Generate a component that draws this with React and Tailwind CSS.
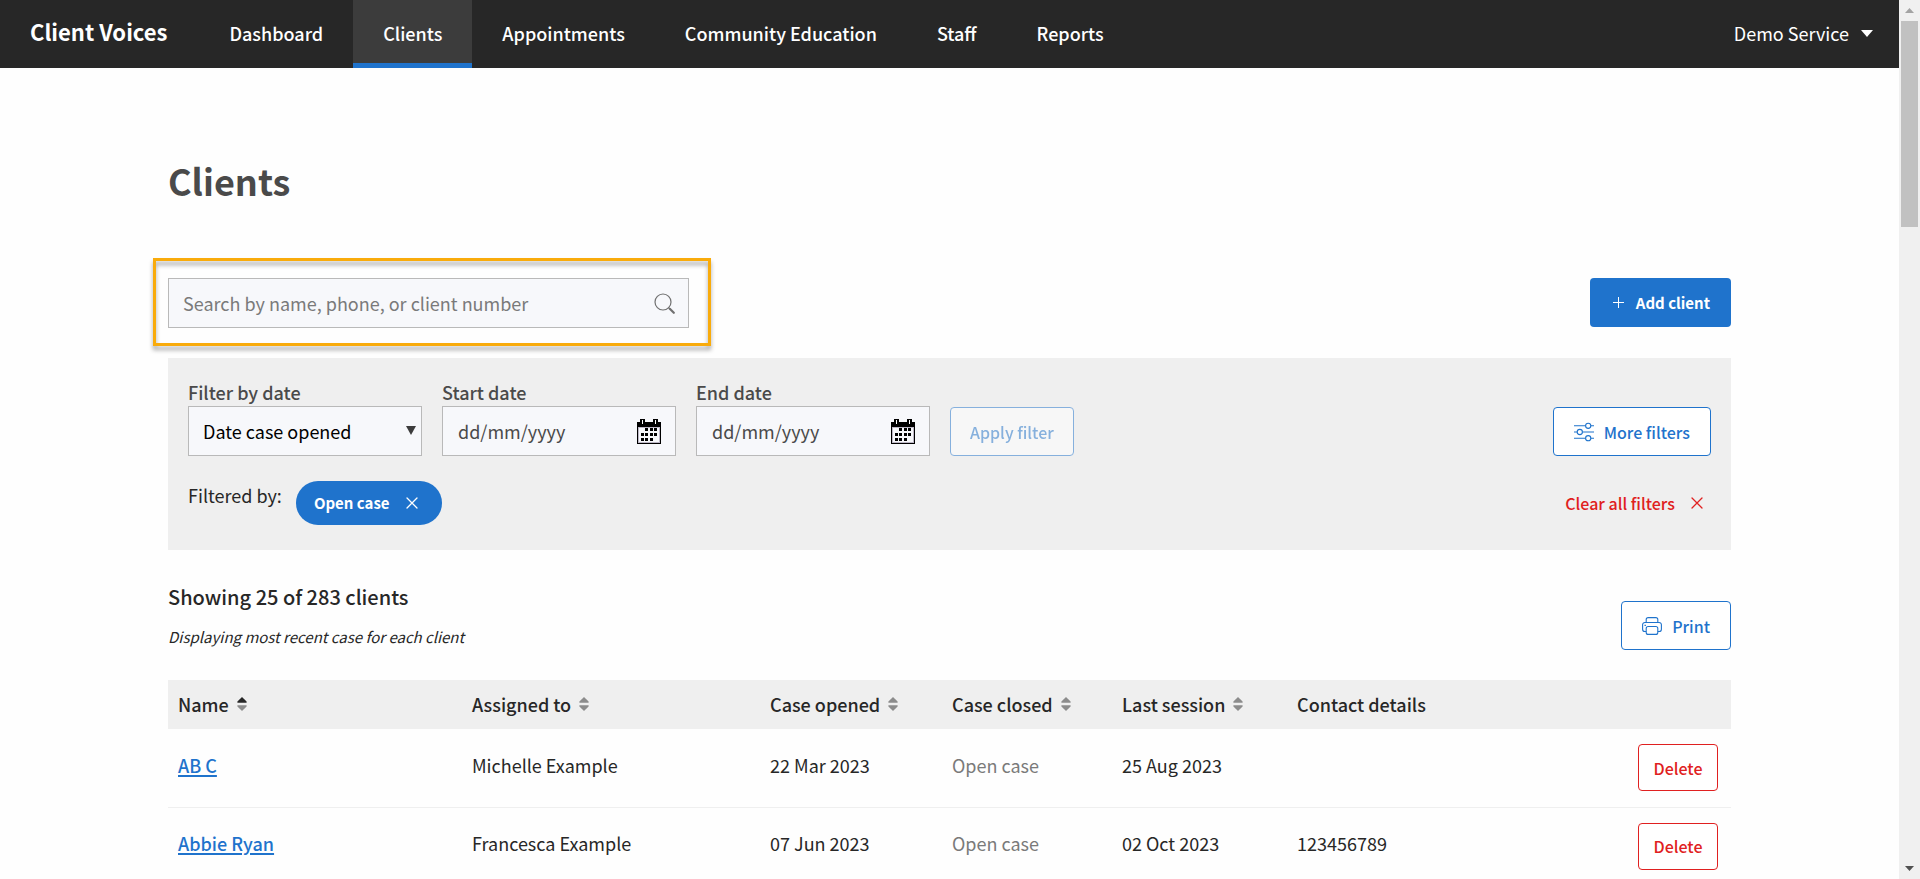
import { useState } from "react";

const navItems = ["Dashboard", "Clients", "Appointments", "Community Education", "Staff", "Reports"];

const columns = [
  { label: "Name", sort: "asc", width: "w-[294px]" },
  { label: "Assigned to", sort: "none", width: "w-[298px]" },
  { label: "Case opened", sort: "none", width: "w-[182px]" },
  { label: "Case closed", sort: "none", width: "w-[170px]" },
  { label: "Last session", sort: "none", width: "w-[175px]" },
  { label: "Contact details", width: "w-[300px]" },
];

const clients = [
  { name: "AB C", assigned: "Michelle Example", opened: "22 Mar 2023", closed: "Open case", last: "25 Aug 2023", contact: "" },
  { name: "Abbie Ryan", assigned: "Francesca Example", opened: "07 Jun 2023", closed: "Open case", last: "02 Oct 2023", contact: "123456789" },
];

function SortIcon({ sort }) {
  return (
    <svg width="10" height="14" viewBox="0 0 10 14" className="shrink-0">
      <path d="M5 0l4.6 4.6v1.2H.4V4.6z" fill={sort === "asc" ? "#272727" : "#8c8c8c"} />
      <path d="M5 14L.4 9.4V8.2h9.2v1.2z" fill="#8c8c8c" />
    </svg>
  );
}

function CloseIcon() {
  return (
    <svg width="12" height="12" viewBox="0 0 12 12" fill="none" stroke="currentColor" strokeWidth="1.3" strokeLinecap="round">
      <path d="M1 1l10 10M11 1L1 11" />
    </svg>
  );
}

function PlusIcon() {
  return (
    <svg width="11" height="11" viewBox="0 0 11 11" stroke="currentColor" strokeWidth="1">
      <path d="M5.5 0v11M0 5.5h11" />
    </svg>
  );
}

function SearchIcon() {
  return (
    <svg width="21" height="21" viewBox="0 0 21 21" fill="none" stroke="#707070" strokeLinecap="round">
      <circle cx="9" cy="9" r="8" strokeWidth="1.2" />
      <path d="M14.8 14.8l1.2 1.2" strokeWidth="1.2" />
      <path d="M15.8 15.8l4 4" strokeWidth="2.2" />
    </svg>
  );
}

function SlidersIcon() {
  return (
    <svg width="20" height="20" viewBox="0 0 20 20" fill="none" stroke="currentColor" strokeWidth="1.1">
      <path d="M0 3.8h11.5M17 3.8h3M0 10h3M8.5 10H20M0 16.2h11.5M17 16.2h3" />
      <circle cx="14.2" cy="3.8" r="2.6" />
      <circle cx="5.8" cy="10" r="2.6" />
      <circle cx="14.2" cy="16.2" r="2.6" />
    </svg>
  );
}

function PrinterIcon() {
  return (
    <svg width="20" height="20" viewBox="0 0 20 20" fill="none" stroke="currentColor" strokeWidth="1.1">
      <path d="M4.2 6.5V3.6a2 2 0 0 1 2-2h7.6a2 2 0 0 1 2 2v2.9" />
      <path d="M4.2 15.5H2.9A2.3 2.3 0 0 1 .6 13.2V8.8a2.3 2.3 0 0 1 2.3-2.3h14.2a2.3 2.3 0 0 1 2.3 2.3v4.4a2.3 2.3 0 0 1-2.3 2.3h-1.3" />
      <rect x="4.2" y="10.5" width="11.6" height="7.9" rx="2" />
      <path d="M2.5 9.4h1.4" />
    </svg>
  );
}

function CalendarIcon() {
  return (
    <svg width="24" height="25" viewBox="0 0 24 25" shapeRendering="crispEdges">
      <path d="M0 3h24v22H0z" fill="#000" />
      <path d="M1 8h22v16H1z" fill="#bdb7c6" />
      <path d="M2 9h20v14H2z" fill="#f7f8fb" />
      <path d="M3 0h5v6H3zM16 0h5v6h-5z" fill="#000" />
      <path d="M5 1h1v4H5zM18 1h1v4h-1z" fill="#fff" />
      <path
        d="M8 9h3v3H8zM12.5 9h3v3h-3zM17 9h3v3h-3zM3.5 14h3v3h-3zM8 14h3v3H8zM12.5 14h3v3h-3zM17 14h3v3h-3zM3.5 19h3v3h-3zM8 19h3v3H8zM12.5 19h3v3h-3z"
        fill="#000"
      />
    </svg>
  );
}

function DateField({ id, label }) {
  const [value, setValue] = useState("");

  return (
    <div className="w-[234px]">
      <label htmlFor={id} className="block font-medium leading-7 text-[#4a4a4a]">{label}</label>
      <div className="flex h-[50px] items-center border border-[#b9b9b9] bg-[#f7f8fb] pr-3.5">
        <input
          id={id}
          type="text"
          placeholder="dd/mm/yyyy"
          value={value}
          onChange={(e) => setValue(e.target.value)}
          className="h-full w-full min-w-0 flex-1 pl-[15px] placeholder-[#4a4a4a] outline-none"
        />
        <button type="button" aria-label={`Choose ${label}`}>
          <CalendarIcon />
        </button>
      </div>
    </div>
  );
}

function Header() {
  return (
    <header className="flex h-[68px] items-stretch bg-[#272727] text-white">
      <a href="#" className="flex items-center pb-1.5 pl-[30px] pr-8 text-[22px] font-bold">Client Voices</a>
      <nav className="flex items-stretch">
        {navItems.map((item) => (
          <a
            key={item}
            href="#"
            className={
              item === "Clients"
                ? "flex items-center border-b-[5px] border-[#1f73cc] bg-[#3c3c3c] px-[30px] pt-[3px] font-medium"
                : "flex items-center px-[30px] pb-0.5 font-medium"
            }
          >
            {item}
          </a>
        ))}
      </nav>
      <button type="button" className="ml-auto flex items-center gap-3 pb-0.5 pr-[26px]">
        Demo Service
        <svg width="12" height="7" viewBox="0 0 12 7" fill="currentColor">
          <path d="M0 0h12L6 7z" />
        </svg>
      </button>
    </header>
  );
}

function Filters() {
  return (
    <section className="mt-[30px] h-[192px] bg-[#efefef] px-5 pt-5">
      <div className="flex items-end gap-5">
        <div className="w-[234px]">
          <label htmlFor="date-filter" className="block font-medium leading-7 text-[#4a4a4a]">Filter by date</label>
          <div className="relative">
            <select
              id="date-filter"
              className="h-[50px] w-full appearance-none border border-[#b9b9b9] bg-[#f7f8fb] pl-3.5 text-black"
            >
              <option>Date case opened</option>
              <option>Date case closed</option>
            </select>
            <svg width="10" height="9" viewBox="0 0 10 9" fill="#3c3c3c" className="pointer-events-none absolute right-1.5 top-5">
              <path d="M0 0h10L5 9z" />
            </svg>
          </div>
        </div>
        <DateField id="start-date" label="Start date" />
        <DateField id="end-date" label="End date" />
        <button
          type="button"
          disabled
          className="h-[49px] rounded border border-[#1f73cc] bg-white px-[19px] text-base font-medium text-[#1f73cc] opacity-50"
        >
          Apply filter
        </button>
        <button
          type="button"
          className="ml-auto flex h-[49px] items-center gap-2.5 rounded border border-[#1f73cc] bg-white px-5 text-base font-medium text-[#1f73cc]"
        >
          <SlidersIcon />
          More filters
        </button>
      </div>

      <div className="mt-[25px] flex items-start">
        <span className="leading-7">Filtered by:</span>
        <button type="button" className="ml-3.5 flex h-11 items-center gap-4 rounded-full bg-[#1f73cc] pl-[18px] pr-6 text-[15px] font-bold text-white">
          Open case
          <CloseIcon />
        </button>
        <button type="button" className="ml-auto flex h-11 items-center gap-4 pr-2 text-base font-medium text-[#e02020]">
          Clear all filters
          <CloseIcon />
        </button>
      </div>
    </section>
  );
}

function ClientTable() {
  return (
    <table className="mt-[30px] w-full table-fixed text-left">
      <thead>
        <tr className="h-[49px] bg-[#efefef]">
          {columns.map((col) => (
            <th key={col.label} className={`${col.width} px-2.5 pb-0.5 font-medium`}>
              {col.sort ? (
                <button type="button" className="flex items-center gap-2">
                  {col.label}
                  <SortIcon sort={col.sort} />
                </button>
              ) : (
                col.label
              )}
            </th>
          ))}
          <th aria-label="Actions" />
        </tr>
      </thead>
      <tbody>
        {clients.map((client) => (
          <tr key={client.name} className="h-[78px] border-b border-[#efefef]">
            <td className="px-2.5 pb-1.5">
              <a href="#" className="font-medium text-[#1f73cc] underline decoration-2 underline-offset-2">{client.name}</a>
            </td>
            <td className="px-2.5 pb-1.5">{client.assigned}</td>
            <td className="px-2.5 pb-1.5">{client.opened}</td>
            <td className="px-2.5 pb-1.5 text-[#7a7a7a]">{client.closed}</td>
            <td className="px-2.5 pb-1.5">{client.last}</td>
            <td className="px-2.5 pb-1.5">{client.contact}</td>
            <td className="pr-[13px] text-right">
              <button type="button" className="h-[47px] w-20 rounded border border-[#e02020] bg-white text-base font-medium text-[#e02020]">
                Delete
              </button>
            </td>
          </tr>
        ))}
      </tbody>
    </table>
  );
}

// Page scroll rail
function ScrollRail() {
  return (
    <div className="flex w-[21px] shrink-0 flex-col items-center bg-[#f0f0f0]">
      <svg width="9" height="5" viewBox="0 0 9 5" fill="#a3a3a3" className="my-2">
        <path d="M4.5 0L9 5H0z" />
      </svg>
      <div className="h-[206px] w-[17px] bg-[#c1c1c1]" />
      <svg width="9" height="5" viewBox="0 0 9 5" fill="#505050" className="mb-2 mt-auto">
        <path d="M4.5 5L0 0h9z" />
      </svg>
    </div>
  );
}

export default function App() {
  const [search, setSearch] = useState("");

  return (
    <div className="flex h-screen overflow-hidden bg-[#fefefe] font-['Noto_Sans_CJK_SC',sans-serif] text-[18px] leading-6 text-[#272727]">
      <div className="min-w-0 flex-1 overflow-hidden">
        <Header />
        <main className="mx-auto max-w-[1563px]">
          <h1 className="pt-[88px] text-[36px] font-bold leading-[48px] text-[#4a4a4a]">Clients</h1>

          <div className="mt-[74px] flex items-start justify-between">
            <div className="relative w-1/3">
              <div className="flex h-[50px] items-center border border-[#b9b9b9] bg-[#f7f8fb] pr-[13px]">
                <input
                  type="search"
                  aria-label="Search clients"
                  placeholder="Search by name, phone, or client number"
                  value={search}
                  onChange={(e) => setSearch(e.target.value)}
                  className="h-full min-w-0 flex-1 pl-3.5 placeholder-[#7a7a7a] outline-none"
                />
                <button type="button" aria-label="Search">
                  <SearchIcon />
                </button>
              </div>
              {/* Highlight frame around the search box */}
              <div className="pointer-events-none absolute -bottom-[18px] -left-[15px] -right-[22px] -top-5 border-[3px] border-[#f9ab0b] drop-shadow-[0_4px_2px_rgba(0,0,0,0.35)]" />
            </div>
            <button type="button" className="flex h-[49px] items-center gap-3 rounded bg-[#1f73cc] pl-[23px] pr-[21px] text-[15px] font-bold text-white">
              <PlusIcon />
              Add client
            </button>
          </div>

          <Filters />

          <div className="mt-[33px] flex items-end justify-between">
            <div className="pb-px">
              <h2 className="text-xl font-medium leading-7">Showing 25 of 283 clients</h2>
              <p className="mt-3.5 text-[15px] italic leading-6">Displaying most recent case for each client</p>
            </div>
            <button
              type="button"
              className="flex h-[49px] items-center gap-2.5 rounded border border-[#1f73cc] bg-white px-5 text-base font-medium text-[#1f73cc]"
            >
              <PrinterIcon />
              Print
            </button>
          </div>

          <ClientTable />
        </main>
      </div>
      <ScrollRail />
    </div>
  );
}
